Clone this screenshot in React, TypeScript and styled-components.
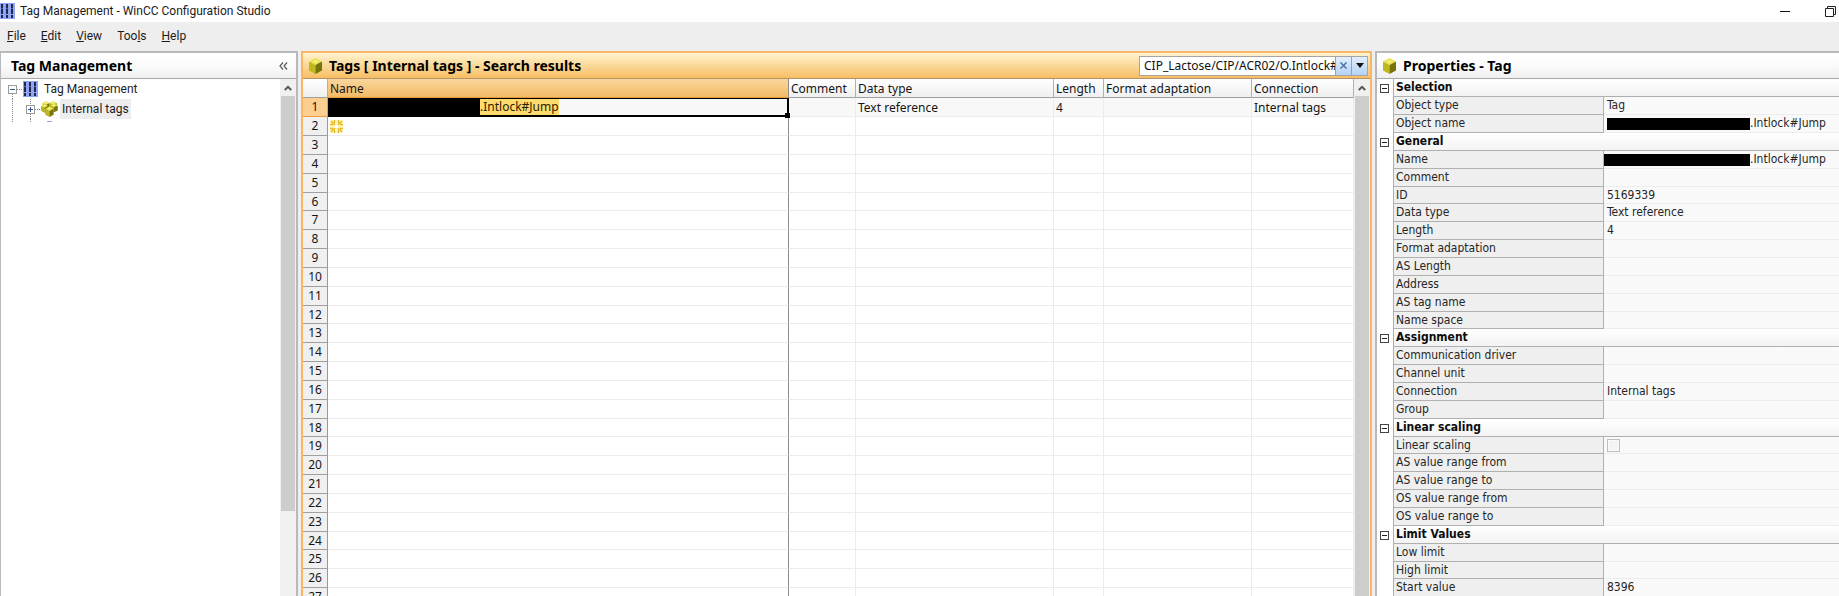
import React from 'react';
import styled, { createGlobalStyle, css } from 'styled-components';

const GlobalStyle = createGlobalStyle`
  *, *::before, *::after { box-sizing: border-box; }
  html, body, #root { height: 100%; }
  body { margin: 0; background: #efefef; overflow: hidden; }
  button { border: 0; padding: 0; background: none; color: inherit; font: inherit; }
`;

const uiFont = `Roboto, "Liberation Sans", sans-serif`;
const gridFont = `"Noto Sans", "Liberation Sans", sans-serif`;
const formFont = `"DejaVu Sans Condensed", "Liberation Sans", sans-serif`;
const line = '#b0b0b0';

const Window = styled.div`
  display: flex;
  flex-direction: column;
  height: 100vh;
  font: 12px/18px ${uiFont};
  color: #1c1c1c;
`;

const TitleBar = styled.header`
  display: flex;
  align-items: center;
  flex: none;
  height: 22px;
  padding-right: 3px;
  background: #fff;
`;

const WindowTitle = styled.h1`
  flex: 1;
  margin: 0 0 0 5px;
  font: inherit;
`;

const WindowButtons = styled.div`
  display: flex;
  gap: 34px;
`;

const IconButton = styled.button`
  display: flex;
  align-items: center;
  justify-content: center;
`;

const MenuBar = styled.nav`
  display: flex;
  flex: none;
  gap: 15px;
  height: 29px;
  padding: 0 7px 1px;
  background: #eee;
`;

const Panels = styled.main`
  display: grid;
  flex: 1;
  grid-template-columns: 298px minmax(0, 1fr) 464px;
  gap: 3px;
  min-height: 0;
`;

const Panel = styled.section<{ $active?: boolean }>`
  display: flex;
  flex-direction: column;
  min-width: 0;
  min-height: 0;
  overflow: hidden;
  background: #fff;
  border: 2px solid ${p => (p.$active ? '#f8b766' : '#b9b9bb')};
  border-bottom: 0;
`;

const TreePanel = styled(Panel)`
  border-left-width: 1px;
`;

const PropertiesPanel = styled(Panel)`
  border-right: 0;
`;

const PanelHeader = styled.div<{ $active?: boolean }>`
  display: flex;
  align-items: center;
  flex: none;
  gap: 6px;
  height: 26px;
  padding: 0 2px 0 5px;
  border-bottom: 1px solid ${p => (p.$active ? '#b39468' : '#a8a8a8')};
  background: ${p =>
    p.$active
      ? 'linear-gradient(#fff5d0, #fad898 50%, #f8be63)'
      : 'linear-gradient(#fff, #fbfbfb 50%, #efefef)'};
`;

const TreeHeader = styled(PanelHeader)`
  padding: 0 8px 0 10px;
`;

const PanelTitle = styled.h2`
  flex: 1;
  margin: 0;
  font: bold 14px/20px ${gridFont};
  color: #000;
  white-space: nowrap;
`;

const PanelBody = styled.div`
  display: flex;
  flex: 1;
  min-height: 0;
`;

const Tree = styled.ul`
  flex: 1;
  margin: 0;
  padding: 0 0 0 6px;
  list-style: none;
`;

const TreeRow = styled.li`
  display: flex;
  align-items: center;
  height: 20px;
`;

const TreeEnd = styled.li`
  display: flex;
`;

const TreeLabel = styled.span<{ $selected?: boolean }>`
  padding: 1px 2px;
  margin-left: ${p => (p.$selected ? 2 : 4)}px;
  background: ${p => (p.$selected ? '#ededed' : 'none')};
`;

const Scrollbar = styled.div`
  display: flex;
  flex: none;
  flex-direction: column;
  width: 16px;
  padding: 0 1px;
  background: #f0f0f0;
`;

const ScrollButton = styled(IconButton)`
  flex: none;
  height: 17px;
`;

const ScrollTrack = styled.div`
  flex: 1;
  min-height: 0;
`;

const ScrollThumb = styled.div<{ $size: number }>`
  height: ${p => p.$size}%;
  background: #cdcdcd;
`;

const GridArea = styled.div`
  flex: 1;
  min-width: 0;
  overflow: hidden;
`;

const TagTable = styled.table`
  width: 100%;
  table-layout: fixed;
  border-collapse: separate;
  border-spacing: 0;
  font: 12px/16px ${gridFont};
  color: #151515;

  tr { height: 19px; }
  tbody tr:nth-child(6n) { height: 18px; }
`;

const ColumnHead = styled.th<{ $selected?: boolean; $frozen?: boolean }>`
  height: 19px;
  padding: 1px 2px 0;
  border-right: 1px solid ${p => (p.$frozen ? '#8c8c8c' : line)};
  border-bottom: 1px solid ${p => (p.$selected ? '#e39a3c' : '#a0a0a0')};
  background: ${p =>
    p.$selected ? 'linear-gradient(#fad59c, #f4bb66)' : 'linear-gradient(#fff, #efefef)'};
  font-weight: normal;
  text-align: left;
  white-space: nowrap;
`;

const RowHead = styled.th<{ $selected?: boolean }>`
  padding: 0;
  border-right: 1px solid #999;
  border-bottom: 1px solid #a0a0a0;
  background: #f0f0f0;
  font-weight: normal;
  text-align: center;
  ${p =>
    p.$selected &&
    css`
      background: #fccf90;
      border-color: #ef9a3c;
    `}
`;

const Cell = styled.td<{ $filled?: boolean; $frozen?: boolean }>`
  padding: 1px 2px 0;
  border-right: 1px solid ${p => (p.$frozen ? '#8c8c8c' : '#ececec')};
  border-bottom: 1px solid #ececec;
  background: ${p => (p.$filled ? '#f8f8f8' : '#fff')};
  white-space: nowrap;
  overflow: hidden;
`;

const SelectedCell = styled.td`
  position: relative;
  padding: 0;
  border: solid #000;
  border-width: 1px 2px 2px 1px;
  background: #f8f8f8;
`;

const FillHandle = styled.span`
  position: absolute;
  right: -3px;
  bottom: -3px;
  width: 5px;
  height: 5px;
  background: #000;
`;

const CellContent = styled.div`
  display: flex;
  align-items: center;
  height: 16px;
`;

const Match = styled.mark`
  display: flex;
  background: #fedb6c;
  color: #2b2200;
`;

const Mask = styled.span<{ $width: number; $height: number }>`
  flex: none;
  width: ${p => p.$width}px;
  height: ${p => p.$height}px;
  background: #000;
`;

const SearchBox = styled.div`
  display: flex;
  width: 229px;
  height: 20px;
  border: 1px solid #a5a5a5;
  background: #fff;
`;

const SearchInput = styled.input`
  flex: 1;
  min-width: 0;
  padding: 0 0 0 4px;
  border: 0;
  outline: 0;
  background: #fff;
  font: 12px/16px ${gridFont};
  color: #111;
`;

const SearchButton = styled(IconButton)`
  width: 16px;
  border-left: 1px solid #8ea4bd;
  background: linear-gradient(#e3effd, #b5d2f5);
`;

const PropertyTable = styled.table`
  width: 100%;
  table-layout: fixed;
  border-collapse: separate;
  border-spacing: 0;
  font: 12px/15px ${formFont};
  color: #262626;

  tr { height: 18px; }
  tr:nth-child(7n) { height: 17px; }
`;

const Gutter = styled.td`
  padding: 0 0 0 3px;
  border-right: 1px solid ${line};
`;

const GroupHead = styled.th`
  padding: 0 2px;
  border-bottom: 1px solid ${line};
  background: linear-gradient(#fff, #f3f3f3);
  color: #0c0c0c;
  text-align: left;
`;

const PropertyName = styled.th`
  padding: 0 2px;
  border-right: 1px solid ${line};
  border-bottom: 1px solid ${line};
  background: #efefef;
  font-weight: normal;
  text-align: left;
  white-space: nowrap;
`;

const PropertyValue = styled.td<{ $flush?: boolean }>`
  padding: 0 ${p => (p.$flush ? 0 : 3)}px;
  border-bottom: 1px solid #ededed;
  background: #f9f9f9;
  white-space: nowrap;
`;

const ValueLine = styled.div`
  display: flex;
  align-items: center;
  height: 15px;
`;

const CheckBox = styled.input`
  display: block;
  appearance: none;
  width: 13px;
  height: 13px;
  margin: 0;
  border: 1px solid #bdbdbd;
  background: #f3f3f3;
  box-shadow: inset 0 0 0 1px #fbfbfb;
`;

const TagManagementIcon = () => (
  <svg width="15" height="16" viewBox="0 0 15 16" aria-hidden="true">
    <rect width="15" height="16" fill="#8fa5f4" />
    {[2, 7, 12].map(x => (
      <g key={x} fill="#23274c">
        <rect x={x - 1} y="1" width="2" height="10" />
        <rect x={x - 1} y="12" width="2" height="3" />
        <rect x={x - 1} y="5" width="2" height="1" fill="#5a66a8" />
      </g>
    ))}
  </svg>
);

const CubeShape = () => (
  <>
    <path d="M7.500 0 14 3.500 7.500 7 1 3.500Z" fill="#e9e44f" />
    <path d="M1 3.500 7.500 7V16L1 12.500Z" fill="#bdb81c" />
    <path d="M14 3.500 7.500 7V16L14 12.500Z" fill="#77740a" />
    <path d="M5 3.500 7.500 2 10 3.500 7.500 5Z" fill="#f6f28c" />
  </>
);

const CubeIcon = () => (
  <svg width="15" height="16" viewBox="0 0 15 16" aria-hidden="true">
    <CubeShape />
  </svg>
);

const CubesIcon = () => (
  <svg width="17" height="16" viewBox="0 0 17 16" aria-hidden="true">
    <g transform="translate(1 0) scale(.55)"><CubeShape /></g>
    <g transform="translate(8 0) scale(.55)"><CubeShape /></g>
    <g transform="translate(-.5 3) scale(.55)"><CubeShape /></g>
    <g transform="translate(9 2.500) scale(.55)"><CubeShape /></g>
    <g transform="translate(3.500 5.500) scale(.65)"><CubeShape /></g>
  </svg>
);

const Dots = ({ d }: { d: string }) => (
  <path d={d} fill="none" stroke="#8a8a8a" strokeDasharray="1 1" />
);

const TreeExpander = ({ open }: { open?: boolean }) => (
  <svg width="16" height="20" viewBox="0 0 16 20" aria-hidden="true">
    <Dots d="M5.500 15V20M10 10.500H16" />
    {!open && <Dots d="M5.500 0V5" />}
    <rect x="1.500" y="6.500" width="8" height="8" fill="#fff" stroke="#9a9a9a" />
    <path d={open ? 'M3 10.500H8' : 'M3 10.500H8M5.500 8V13'} stroke="#3d5590" fill="none" />
  </svg>
);

const TreeGuide = () => (
  <svg width="18" height="20" viewBox="0 0 18 20" aria-hidden="true">
    <Dots d="M5.500 0V20" />
  </svg>
);

const TreeTail = () => (
  <svg width="50" height="4" viewBox="0 0 50 4" aria-hidden="true">
    <Dots d="M5.500 0V3M23.500 0V3" />
    <path d="M40 2.500H45" stroke="#8fa5f4" />
  </svg>
);

const MinusBox = () => (
  <svg width="9" height="9" viewBox="0 0 9 9" aria-hidden="true">
    <rect x=".5" y=".5" width="8" height="8" fill="#fff" stroke="#444" />
    <path d="M2 4.500H7" stroke="#222" />
  </svg>
);

const UpArrow = () => (
  <svg width="8" height="6" viewBox="0 0 8 6" aria-hidden="true">
    <path d="M.8 5 4 1.800 7.200 5" fill="none" stroke="#555" strokeWidth="2" />
  </svg>
);

const NewRowIcon = () => (
  <svg width="13" height="13" viewBox="0 0 13 13" aria-hidden="true">
    <rect width="13" height="13" fill="#fff6c4" />
    <path
      d="M1 1 5 5M12 1 8 5M1 12 5 8M12 12 8 8M4.500 0V3M8.500 0V3M4.500 10V13M8.500 10V13M0 4.500H3M0 8.500H3M10 4.500H13M10 8.500H13"
      fill="none" stroke="#e6b91c" strokeWidth="1.400"
    />
    <rect x="5" y="5" width="3" height="3" fill="#fff" />
  </svg>
);

const menus: [string, string, string][] = [
  ['', 'F', 'ile'],
  ['', 'E', 'dit'],
  ['', 'V', 'iew'],
  ['Too', 'l', 's'],
  ['', 'H', 'elp'],
];

type Field = { name: string; value?: string; masked?: number; flush?: boolean; check?: boolean };

const groups: { title: string; fields: Field[] }[] = [
  {
    title: 'Selection',
    fields: [
      { name: 'Object type', value: 'Tag' },
      { name: 'Object name', value: '.Intlock#Jump', masked: 143 },
    ],
  },
  {
    title: 'General',
    fields: [
      { name: 'Name', value: '.Intlock#Jump', masked: 146, flush: true },
      { name: 'Comment' },
      { name: 'ID', value: '5169339' },
      { name: 'Data type', value: 'Text reference' },
      { name: 'Length', value: '4' },
      { name: 'Format adaptation' },
      { name: 'AS Length' },
      { name: 'Address' },
      { name: 'AS tag name' },
      { name: 'Name space' },
    ],
  },
  {
    title: 'Assignment',
    fields: [
      { name: 'Communication driver' },
      { name: 'Channel unit' },
      { name: 'Connection', value: 'Internal tags' },
      { name: 'Group' },
    ],
  },
  {
    title: 'Linear scaling',
    fields: [
      { name: 'Linear scaling', check: true },
      { name: 'AS value range from' },
      { name: 'AS value range to' },
      { name: 'OS value range from' },
      { name: 'OS value range to' },
    ],
  },
  {
    title: 'Limit Values',
    fields: [
      { name: 'Low limit' },
      { name: 'High limit' },
      { name: 'Start value', value: '8396' },
    ],
  },
];

const emptyRows = Array.from({ length: 26 }, (_, i) => i + 2);

const PropertyRow = ({ field }: { field: Field }) => (
  <tr>
    <Gutter />
    <PropertyName scope="row">
      {field.check ? <label htmlFor="linear-scaling">{field.name}</label> : field.name}
    </PropertyName>
    <PropertyValue $flush={field.flush}>
      {field.check && <CheckBox type="checkbox" id="linear-scaling" />}
      {field.masked ? (
        <ValueLine>
          <Mask $width={field.masked} $height={12} />
          {field.value}
        </ValueLine>
      ) : (
        field.value
      )}
    </PropertyValue>
  </tr>
);

export default function App() {
  return (
    <Window>
      <GlobalStyle />
      <TitleBar>
        <TagManagementIcon />
        <WindowTitle>Tag Management - WinCC Configuration Studio</WindowTitle>
        <WindowButtons>
          <IconButton aria-label="Minimize">
            <svg width="11" height="11" viewBox="0 0 11 11"><path d="M0 5.500H10" stroke="#111" /></svg>
          </IconButton>
          <IconButton aria-label="Restore">
            <svg width="11" height="11" viewBox="0 0 11 11">
              <path d="M.5 2.500H8.500V10.500H.5ZM2.500 2.500V.5H10.500V8.500H8.500" fill="none" stroke="#222" />
            </svg>
          </IconButton>
        </WindowButtons>
      </TitleBar>
      <MenuBar>
        {menus.map(([before, key, after]) => (
          <button key={key}>{before}<u>{key}</u>{after}</button>
        ))}
      </MenuBar>
      <Panels>
        <TreePanel>
          <TreeHeader>
            <PanelTitle>Tag Management</PanelTitle>
            <IconButton aria-label="Collapse panel">
              <svg width="9" height="8" viewBox="0 0 9 8">
                <path d="M4 .5 1 4 4 7.500M8 .5 5 4 8 7.500" fill="none" stroke="#555" strokeWidth="1.200" />
              </svg>
            </IconButton>
          </TreeHeader>
          <PanelBody>
            <Tree>
              <TreeRow>
                <IconButton aria-label="Collapse Tag Management"><TreeExpander open /></IconButton>
                <TagManagementIcon />
                <TreeLabel>Tag Management</TreeLabel>
              </TreeRow>
              <TreeRow>
                <TreeGuide />
                <IconButton aria-label="Expand Internal tags"><TreeExpander /></IconButton>
                <CubesIcon />
                <TreeLabel $selected>Internal tags</TreeLabel>
              </TreeRow>
              <TreeEnd><TreeTail /></TreeEnd>
            </Tree>
            <Scrollbar>
              <ScrollButton aria-label="Scroll up"><UpArrow /></ScrollButton>
              <ScrollTrack><ScrollThumb $size={83} /></ScrollTrack>
            </Scrollbar>
          </PanelBody>
        </TreePanel>

        <Panel $active>
          <PanelHeader $active>
            <CubeIcon />
            <PanelTitle>Tags [ Internal tags ] - Search results</PanelTitle>
            <SearchBox>
              <SearchInput aria-label="Search" defaultValue="CIP_Lactose/CIP/ACR02/O.Intlock#Jump" />
              <SearchButton aria-label="Clear search">
                <svg width="7" height="7" viewBox="0 0 7 7"><path d="M.5.5 6.500 6.500M6.500.5.5 6.500" stroke="#4577aa" strokeWidth="1.500" /></svg>
              </SearchButton>
              <SearchButton aria-label="Search options">
                <svg width="8" height="5" viewBox="0 0 8 5"><path d="M0 0H8L4 5Z" fill="#111" /></svg>
              </SearchButton>
            </SearchBox>
          </PanelHeader>
          <PanelBody>
            <GridArea>
              <TagTable>
                <colgroup>
                  <col width="25" />
                  <col width="461" />
                  <col width="67" />
                  <col width="198" />
                  <col width="50" />
                  <col width="148" />
                  <col />
                </colgroup>
                <thead>
                  <tr>
                    <ColumnHead aria-label="Row" />
                    <ColumnHead $selected $frozen>Name</ColumnHead>
                    <ColumnHead>Comment</ColumnHead>
                    <ColumnHead>Data type</ColumnHead>
                    <ColumnHead>Length</ColumnHead>
                    <ColumnHead>Format adaptation</ColumnHead>
                    <ColumnHead>Connection</ColumnHead>
                  </tr>
                </thead>
                <tbody>
                  <tr>
                    <RowHead scope="row" $selected>1</RowHead>
                    <SelectedCell>
                      <CellContent>
                        <Match><Mask $width={151} $height={16} />.Intlock#Jump</Match>
                      </CellContent>
                      <FillHandle />
                    </SelectedCell>
                    <Cell $filled />
                    <Cell $filled>Text reference</Cell>
                    <Cell $filled>4</Cell>
                    <Cell $filled />
                    <Cell $filled>Internal tags</Cell>
                  </tr>
                  {emptyRows.map(n => (
                    <tr key={n}>
                      <RowHead scope="row">{n}</RowHead>
                      <Cell $frozen>{n === 2 && <CellContent><NewRowIcon /></CellContent>}</Cell>
                      <Cell /><Cell /><Cell /><Cell /><Cell />
                    </tr>
                  ))}
                </tbody>
              </TagTable>
            </GridArea>
            <Scrollbar>
              <ScrollButton aria-label="Scroll up"><UpArrow /></ScrollButton>
              <ScrollTrack><ScrollThumb $size={100} /></ScrollTrack>
            </Scrollbar>
          </PanelBody>
        </Panel>

        <PropertiesPanel>
          <PanelHeader>
            <CubeIcon />
            <PanelTitle>Properties - Tag</PanelTitle>
          </PanelHeader>
          <PropertyTable>
            <colgroup>
              <col width="17" />
              <col width="210" />
              <col />
            </colgroup>
            <tbody>
              {groups.map(group => (
                <React.Fragment key={group.title}>
                  <tr>
                    <Gutter>
                      <IconButton aria-label={`Collapse ${group.title}`}><MinusBox /></IconButton>
                    </Gutter>
                    <GroupHead colSpan={2}>{group.title}</GroupHead>
                  </tr>
                  {group.fields.map(field => <PropertyRow key={field.name} field={field} />)}
                </React.Fragment>
              ))}
            </tbody>
          </PropertyTable>
        </PropertiesPanel>
      </Panels>
    </Window>
  );
}
